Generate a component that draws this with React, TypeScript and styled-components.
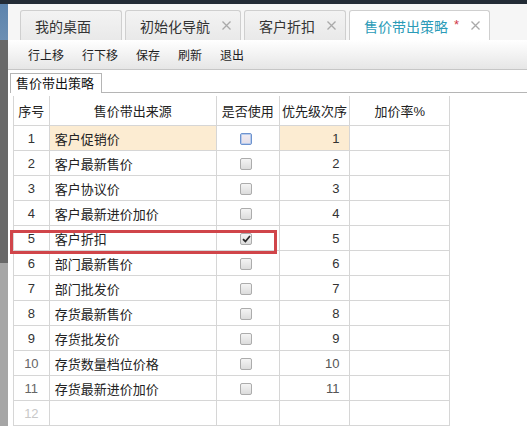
import React from 'react';
import styled, {createGlobalStyle} from 'styled-components';

const GlobalStyle = createGlobalStyle`
  html, body {
    margin: 0;
    padding: 0;
    background: #fff;
    font-family: "Liberation Sans", "Noto Sans CJK SC", sans-serif;
    color: #222;
  }
`;

const Page = styled.div`
  width: 527px;
  height: 426px;
  overflow: hidden;
  display: flex;
  flex-direction: column;
`;

const TopBar = styled.div`
  height: 4px;
  background: #232c36;
  flex-shrink: 0;
`;

const Body = styled.div`
  flex: 1;
  display: flex;
  min-height: 0;
`;

const SideStrip = styled.div`
  width: 8px;
  flex-shrink: 0;
  display: flex;
  flex-direction: column;
`;

const StripPart = styled.div<{$h?: number; $bg: string}>`
  background: ${(p) => p.$bg};
  ${(p) => (p.$h ? `height: ${p.$h}px;` : 'flex: 1;')}
`;

const Main = styled.div`
  flex: 1;
  display: flex;
  flex-direction: column;
  min-width: 0;
`;

const TabBar = styled.div`
  height: 36px;
  display: flex;
  align-items: flex-end;
  gap: 3px;
  padding-left: 12px;
  background: #f6f6f6;
  flex-shrink: 0;
`;

const Tab = styled.div<{$active?: boolean}>`
  height: 30px;
  box-sizing: border-box;
  display: flex;
  align-items: center;
  padding: 0 9px 0 14px;
  border: 1px solid #cfcfcf;
  border-bottom: none;
  border-radius: 3px 3px 0 0;
  background: ${(p) => (p.$active ? '#fff' : 'linear-gradient(#f3f3f3, #e9e9e9)')};
  color: ${(p) => (p.$active ? '#2b9bb7' : '#333')};
  font-size: 14px;
  white-space: nowrap;
`;

const Star = styled.span`
  color: #d0384a;
  margin-left: 6px;
  font-size: 13px;
  align-self: flex-start;
  margin-top: 6px;
`;

const Close = styled.span<{$hidden?: boolean}>`
  display: inline-flex;
  margin-left: 12px;
  visibility: ${(p) => (p.$hidden ? 'hidden' : 'visible')};
`;

const Toolbar = styled.div`
  height: 30px;
  box-sizing: border-box;
  display: flex;
  align-items: center;
  gap: 18px;
  padding-left: 20px;
  background: linear-gradient(#ffffff, #e6e6e6);
  border-bottom: 1px solid #c6c6c6;
  flex-shrink: 0;
`;

const ToolButton = styled.span`
  font-size: 12px;
  color: #1e1e1e;
  cursor: pointer;
`;

const Content = styled.div`
  flex: 1;
  background: #fff;
  padding: 3px 0 0 2px;
  min-height: 0;
`;

const SubTabRow = styled.div`
  display: flex;
  align-items: flex-end;
  border-bottom: 1px solid #b5b5b5;
`;

const SubTab = styled.div`
  height: 20px;
  box-sizing: border-box;
  padding: 0 7px 0 5px;
  border: 1px solid #b5b5b5;
  border-bottom: none;
  margin-bottom: -1px;
  background: #fff;
  font-size: 13px;
  line-height: 19px;
  color: #111;
`;

const GridWrap = styled.div`
  position: relative;
  margin: 3px 0 0 3px;
  width: 437px;
`;

const Grid = styled.table`
  border-collapse: collapse;
  table-layout: fixed;
  font-size: 13px;
  border-left: 1px solid #d6d6d6;
`;

const HeadCell = styled.th<{$w: number}>`
  width: ${(p) => p.$w}px;
  height: 29px;
  padding: 0;
  font-weight: normal;
  color: #222;
  text-align: center;
  border: 1px solid #d6d6d6;
  border-left: none;
  border-top: none;
  white-space: nowrap;
`;

const Cell = styled.td<{$align?: string; $hl?: boolean; $color?: string}>`
  height: 24px;
  padding: ${(p) => (p.$align === 'right' ? '0 10px 0 0' : p.$align === 'left' ? '0 0 0 5px' : '0')};
  text-align: ${(p) => p.$align || 'center'};
  background: ${(p) => (p.$hl ? '#fcecd2' : '#fff')};
  color: ${(p) => p.$color || '#222'};
  border: 1px solid #d6d6d6;
  border-left: none;
  white-space: nowrap;
`;

const Check = styled.span<{$focus?: boolean}>`
  display: inline-flex;
  align-items: center;
  justify-content: center;
  width: 12px;
  height: 12px;
  box-sizing: border-box;
  border-radius: 2px;
  border: 1px solid ${(p) => (p.$focus ? '#6d93cf' : '#acacac')};
  background: ${(p) => (p.$focus ? 'linear-gradient(#f0ecf2, #e4dee8)' : 'linear-gradient(#f4f4f4, #dcdcdc)')};
  box-shadow: ${(p) => (p.$focus ? 'inset 0 0 0 1px #b8cbec' : 'none')};
  vertical-align: middle;
  margin-left: -3px;
`;

const Highlight = styled.div`
  position: absolute;
  left: -3px;
  top: 134px;
  width: 267px;
  height: 24px;
  box-sizing: border-box;
  border: 3px solid #d0454a;
  pointer-events: none;
`;

function CloseIcon() {
  return (
    <svg width="9" height="9" viewBox="0 0 9 9">
      <path d="M0.5 0.5L8.5 8.5M8.5 0.5L0.5 8.5" stroke="#a9a9a9" strokeWidth="1.3" />
    </svg>
  );
}

function CheckMark() {
  return (
    <svg width="9" height="8" viewBox="0 0 9 8">
      <path d="M1 4.2L3.4 6.5L8 1" stroke="#2a2a2a" strokeWidth="1.8" fill="none" />
    </svg>
  );
}

const tabs = [
  {title: '我的桌面', closable: false},
  {title: '初始化导航', closable: true},
  {title: '客户折扣', closable: true},
  {title: '售价带出策略', closable: true, active: true, dirty: true},
];

const tools = ['行上移', '行下移', '保存', '刷新', '退出'];

const rows = [
  {name: '客户促销价', checked: false},
  {name: '客户最新售价', checked: false},
  {name: '客户协议价', checked: false},
  {name: '客户最新进价加价', checked: false},
  {name: '客户折扣', checked: true},
  {name: '部门最新售价', checked: false},
  {name: '部门批发价', checked: false},
  {name: '存货最新售价', checked: false},
  {name: '存货批发价', checked: false},
  {name: '存货数量档位价格', checked: false},
  {name: '存货最新进价加价', checked: false},
];

export default function App() {
  return (
    <Page>
      <GlobalStyle />
      <TopBar />
      <Body>
        <SideStrip>
          <StripPart $h={36} $bg="linear-gradient(#5d84ad, #6c8fb3)" />
          <StripPart $h={223} $bg="#686868" />
          <StripPart $bg="#a6a6a6" />
        </SideStrip>
        <Main>
          <TabBar>
            {tabs.map((t) => (
              <Tab key={t.title} $active={t.active}>
                {t.title}
                {t.dirty && <Star>*</Star>}
                <Close $hidden={!t.closable}>
                  <CloseIcon />
                </Close>
              </Tab>
            ))}
          </TabBar>
          <Toolbar>
            {tools.map((t) => (
              <ToolButton key={t}>{t}</ToolButton>
            ))}
          </Toolbar>
          <Content>
            <SubTabRow>
              <SubTab>售价带出策略</SubTab>
            </SubTabRow>
            <GridWrap>
              <Grid>
                <thead>
                  <tr>
                    <HeadCell $w={35}>序号</HeadCell>
                    <HeadCell $w={168}>售价带出来源</HeadCell>
                    <HeadCell $w={62}>是否使用</HeadCell>
                    <HeadCell $w={70}>优先级次序</HeadCell>
                    <HeadCell $w={100}>加价率%</HeadCell>
                  </tr>
                </thead>
                <tbody>
                  {rows.map((r, i) => (
                    <tr key={r.name}>
                      <Cell $color={i >= 9 ? '#666' : '#333'}>{i + 1}</Cell>
                      <Cell $align="left" $hl={i === 0}>
                        {r.name}
                      </Cell>
                      <Cell>
                        <Check $focus={i === 0}>{r.checked && <CheckMark />}</Check>
                      </Cell>
                      <Cell $align="right" $hl={i === 0} $color={i >= 9 ? '#555' : '#333'}>
                        {i + 1}
                      </Cell>
                      <Cell />
                    </tr>
                  ))}
                  <tr>
                    <Cell $color="#c8c8c8">12</Cell>
                    <Cell />
                    <Cell />
                    <Cell />
                    <Cell />
                  </tr>
                </tbody>
              </Grid>
              <Highlight />
            </GridWrap>
          </Content>
        </Main>
      </Body>
    </Page>
  );
}
